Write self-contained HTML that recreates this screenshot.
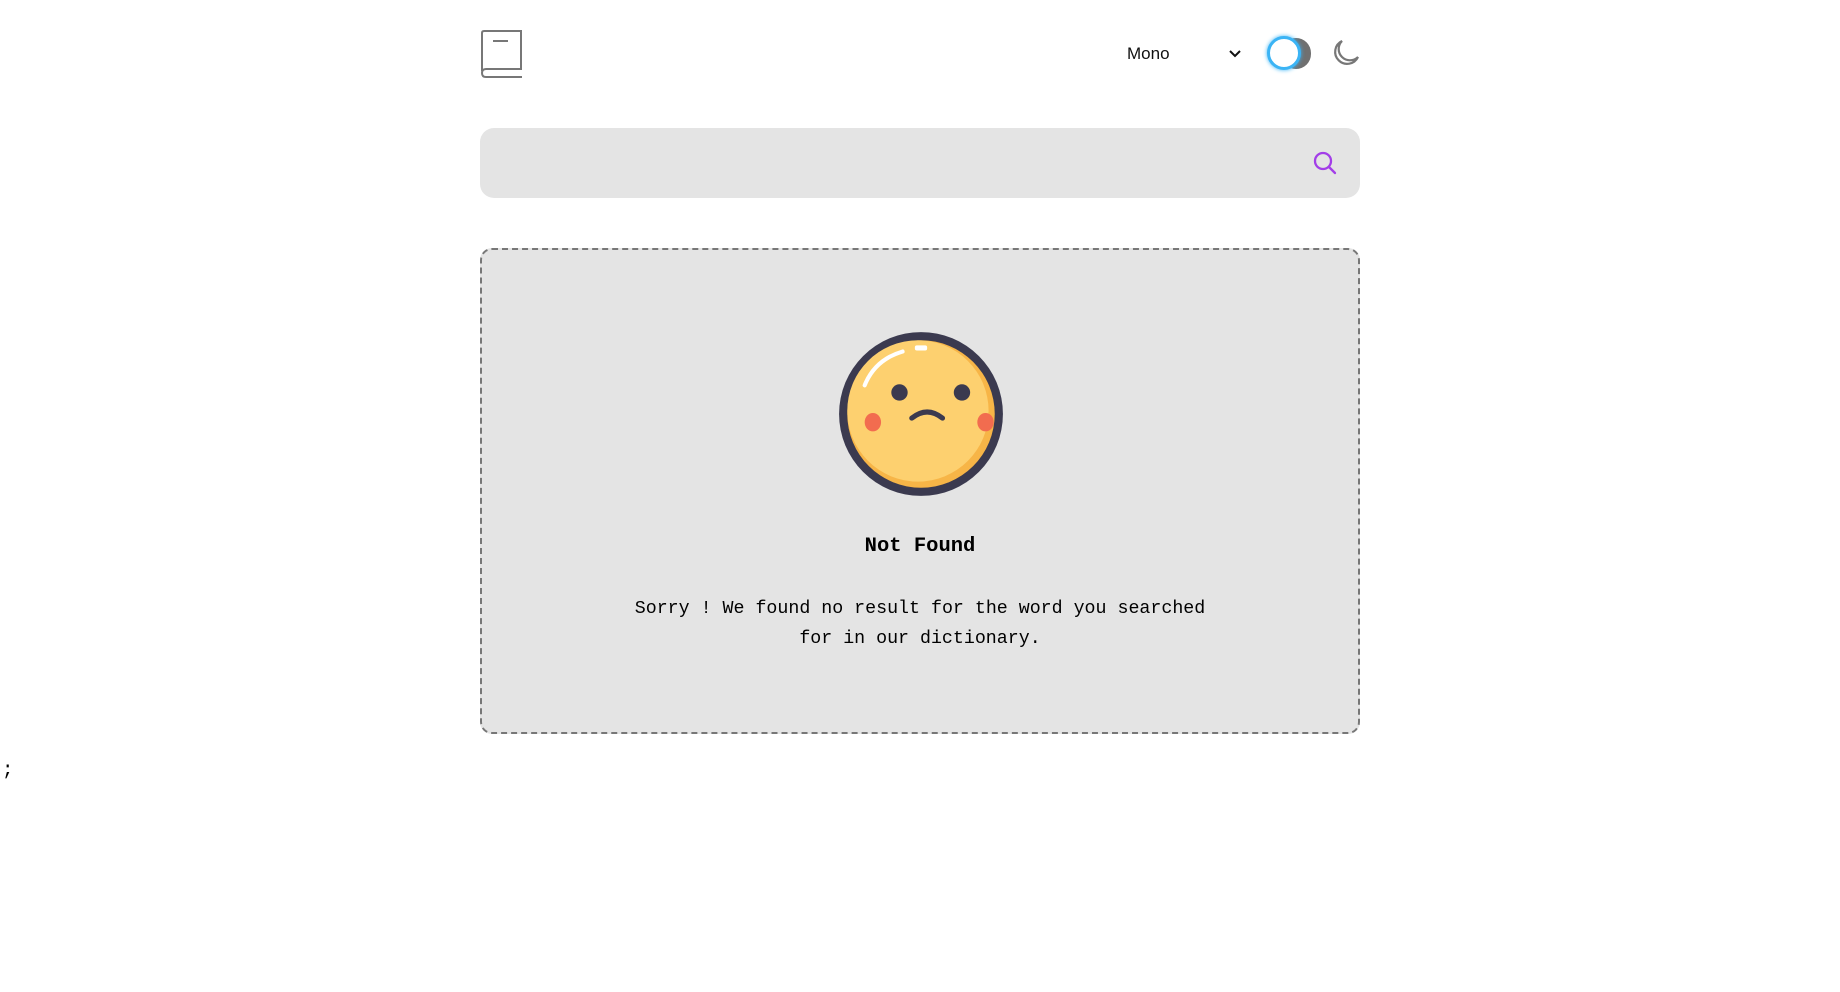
<!DOCTYPE html>
<html><head><meta charset="utf-8"><style>
html,body{margin:0;padding:0;background:#fff;width:1840px;height:992px;overflow:hidden;position:relative;font-family:"Liberation Mono",monospace}
.abs{position:absolute}
</style></head><body>
<svg class="abs" style="left:479px;top:29px" width="44" height="50" viewBox="0 0 44 50" fill="none" stroke="#777" stroke-width="2">
<path d="M3 42 V4 Q3 2 5 2 H42 V40 H7 Q3 40 3 44 Q3 48 7 48 H43"/>
<path d="M14 12 H29"/>
</svg>
<div class="abs" style="left:1127px;top:44px;font:17px 'Liberation Sans',sans-serif;color:#111">Mono</div>
<svg class="abs" style="left:1228px;top:49px" width="14" height="10" viewBox="0 0 14 10"><path d="M2 2 L7 7 L12 2" fill="none" stroke="#111" stroke-width="2"/></svg>
<div class="abs" style="left:1281px;top:38px;width:30px;height:31px;border-radius:16px;background:#707070"></div>
<div class="abs" style="left:1267px;top:36px;width:28px;height:28px;border-radius:50%;background:#fff;border:3px solid #3bb4f5;box-shadow:0 0 4px #3bb4f5"></div>
<svg class="abs" style="left:1329px;top:38px" width="32" height="32" viewBox="0 0 32 32"><path d="M13 3 A12 12 0 1 0 29 19 A10 10 0 0 1 13 3 Z" fill="none" stroke="#777" stroke-width="2.2"/></svg>
<div class="abs" style="left:480px;top:128px;width:880px;height:70px;border-radius:14px;background:#e4e4e4"></div>
<svg class="abs" style="left:1312px;top:150px" width="26" height="26" viewBox="0 0 26 26" fill="none" stroke="#a33ee8" stroke-width="2.3"><circle cx="11" cy="11" r="8"/><path d="M17 17 L23 23" stroke-linecap="round"/></svg>
<div class="abs" style="left:480px;top:248px;width:876px;height:482px;border:2px dashed #777;border-radius:12px;background:#e4e4e4"></div>
<svg class="abs" style="left:836px;top:329px" width="170" height="170" viewBox="0 0 166 166">
<circle cx="83" cy="83" r="80" fill="#3b3a4f"/>
<circle cx="83" cy="83" r="72" fill="#f7b547"/>
<circle cx="80" cy="80" r="69" fill="#fdd06f"/>
<path d="M28 55 Q38 30 65 22" stroke="#fff" stroke-width="4" fill="none" stroke-linecap="round"/>
<rect x="77" y="16" width="12" height="5" rx="2" fill="#fff"/>
<ellipse cx="62" cy="62" rx="8" ry="8" fill="#3b3a4f"/>
<ellipse cx="123" cy="62" rx="8" ry="8" fill="#3b3a4f"/>
<ellipse cx="36" cy="91" rx="8" ry="9" fill="#f26c4f"/>
<ellipse cx="146" cy="91" rx="8" ry="9" fill="#f26c4f"/>
<path d="M74 87 Q89 75 104 87" stroke="#3b3a4f" stroke-width="5" fill="none" stroke-linecap="round"/>
</svg>
<div class="abs" style="left:0;width:1840px;top:535px;text-align:center;font-weight:bold;font-size:20.5px;color:#000">Not Found</div>
<div class="abs" style="left:0;width:1840px;top:594px;text-align:center;font-size:18.3px;line-height:30px;color:#000">Sorry ! We found no result for the word you searched<br>for in our dictionary.</div>
<div class="abs" style="left:2px;top:759px;font-size:19px;color:#000">;</div>
</body></html>
